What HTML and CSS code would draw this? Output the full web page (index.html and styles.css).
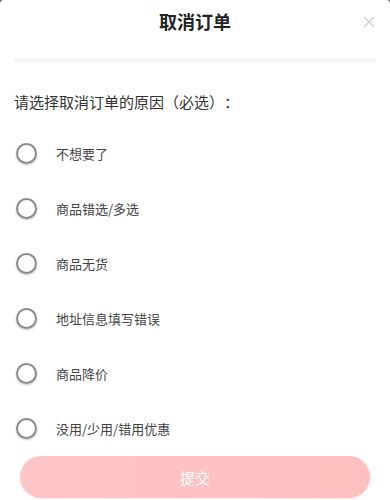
FILE: index.html
```html
<!DOCTYPE html>
<html lang="zh">
<head>
<meta charset="utf-8">
<link rel="stylesheet" href="styles.css">
</head>
<body>
<div class="sheet">
  <div class="header">
    <h1 class="title">取消订单</h1>
    <span class="close">
      <svg width="12" height="12" viewBox="0 0 12 12"><path d="M1 1L11 11M11 1L1 11" stroke="#cfcfcf" stroke-width="1.3" fill="none"/></svg>
    </span>
  </div>
  <div class="divider"></div>
  <p class="prompt">请选择取消订单的原因（必选）：</p>
  <ul class="options">
    <li class="option"><span class="radio"></span><span class="label">不想要了</span></li>
    <li class="option"><span class="radio"></span><span class="label">商品错选/多选</span></li>
    <li class="option"><span class="radio"></span><span class="label">商品无货</span></li>
    <li class="option"><span class="radio"></span><span class="label">地址信息填写错误</span></li>
    <li class="option"><span class="radio"></span><span class="label">商品降价</span></li>
    <li class="option"><span class="radio"></span><span class="label">没用/少用/错用优惠</span></li>
  </ul>
  <div class="footer">
    <button class="submit">提交</button>
  </div>
</div>
</body>
</html>
```
FILE: styles.css
```css
html, body {
  margin: 0;
  padding: 0;
  background: #6b6b6b;
}
body {
  font-family: "Noto Sans CJK SC", "Noto Sans", sans-serif;
  width: 390px;
  height: 500px;
  overflow: hidden;
  text-spacing-trim: space-all;
}
.sheet {
  background: #fff;
  border-radius: 4px 4px 0 0;
  height: 500px;
  box-sizing: border-box;
}
.header {
  position: relative;
  height: 42px;
  display: flex;
  align-items: center;
  justify-content: center;
}
.title {
  margin: 0;
  font-size: 18px;
  font-weight: 600;
  color: #222;
  line-height: 42px;
}
.close {
  position: absolute;
  right: 15px;
  top: 16px;
  width: 12px;
  height: 12px;
  display: flex;
}
.divider {
  margin: 16px 14px 0;
  height: 5px;
  background: #f5f5f5;
}
.prompt {
  margin: 29px 14px 0;
  font-size: 15px;
  line-height: 20px;
  color: #333;
}
.options {
  list-style: none;
  margin: 14px 0 0;
  padding: 0;
}
.option {
  height: 55px;
  display: flex;
  align-items: center;
  padding-left: 16px;
}
.radio {
  width: 17px;
  height: 17px;
  border: 2px solid #8a8a8a;
  border-radius: 50%;
  box-shadow: 0 1px 2px rgba(0,0,0,0.25);
  flex: none;
}
.label {
  margin-left: 19px;
  font-size: 13px;
  color: #444;
}
.footer {
  padding: 0 20px;
}
.submit {
  width: 100%;
  height: 42px;
  border: none;
  border-radius: 21px;
  background: linear-gradient(90deg, #ffc4c6, #ffbfbf);
  color: #fff;
  font-family: inherit;
  font-size: 15px;
  box-shadow: 0 1px 3px rgba(0,0,0,0.08);
}
```
